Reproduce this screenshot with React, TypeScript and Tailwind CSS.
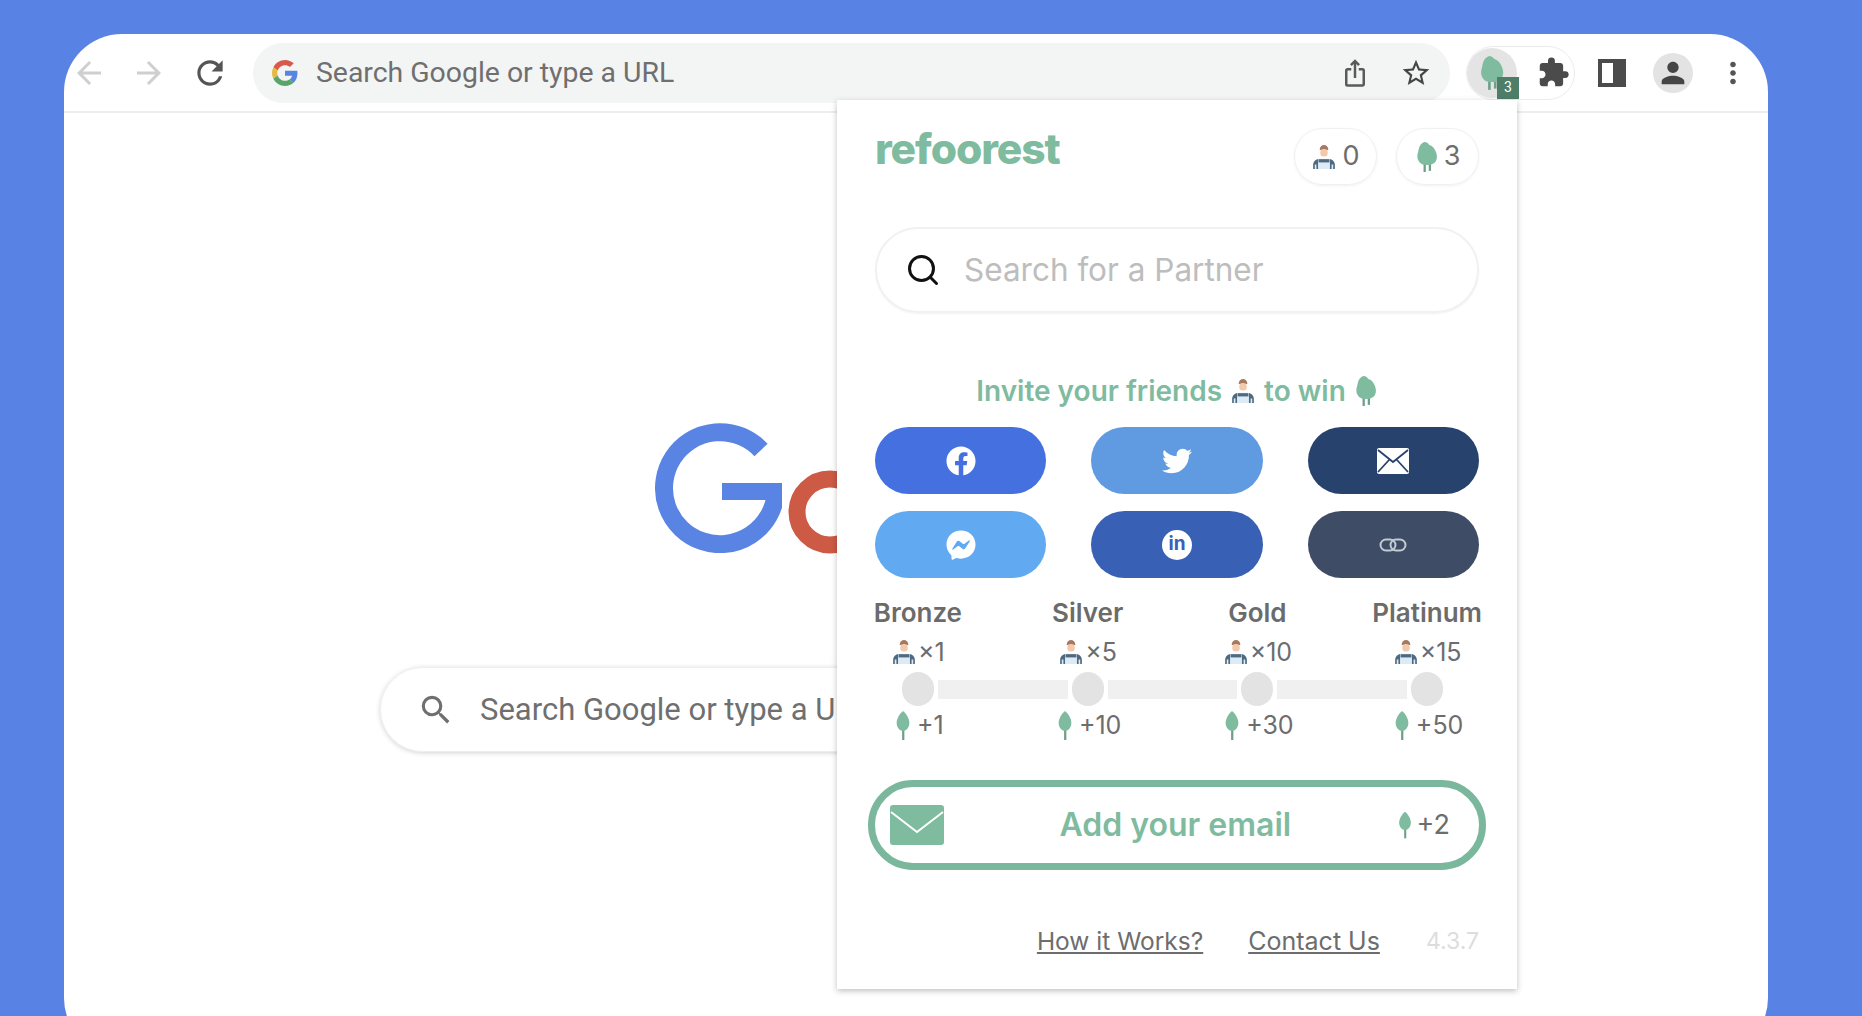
import { FaFacebook, FaFacebookMessenger, FaTwitter } from "react-icons/fa";
import { LuSearch } from "react-icons/lu";
import {
  MdArrowBack,
  MdArrowForward,
  MdExtension,
  MdIosShare,
  MdMoreVert,
  MdPerson,
  MdRefresh,
  MdSearch,
  MdStarBorder,
} from "react-icons/md";

const poppins = "font-['Inter','Noto_Sans',sans-serif]";

function Person({ className }: { className: string }) {
  return (
    <svg viewBox="0 0 24 24" className={className}>
      <path d="M8 5.500C8 2.500 10 1 12 1s4 1.500 4 4.500z" fill="#a5795f" />
      <rect x="8.600" y="4.500" width="6.800" height="7" rx="3" fill="#f3c9ad" />
      <path d="M2 23v-4c0-3 2.500-5 6-5.500h8c3.500.5 6 2.500 6 5.500v4z" fill="#dcebf5" />
      <path d="M2 23v-4c0-2.500 2-4.500 4.500-5.200V23H5v-4H3.500v4zM22 23v-4c0-2.500-2-4.500-4.500-5.200V23H19v-4h1.500v4z" fill="#4f6a80" />
      <rect x="7" y="14" width="10" height="3" fill="#4f6a80" />
    </svg>
  );
}

function Tree({ className, double }: { className: string; double?: boolean }) {
  if (double) {
    return (
      <svg viewBox="0 0 20 26" className={className}>
        <rect x="7" y="17" width="2" height="9" fill="#6f9f8a" />
        <rect x="11.500" y="17" width="2" height="8" fill="#6f9f8a" />
        <path d="M8 0C4 1 3 5 2.500 8 1.500 11 1 14 3 17c1.500 2 3 3 7 3s6-1 7.500-3c1.500-2.500 1.500-6 0-9-1-2.500-3-5-5.500-5.500C11 1 9.500 0 8 0z" fill="#7fbb9f" />
      </svg>
    );
  }
  return (
    <svg viewBox="0 0 24 32" className={className}>
      <rect x="11" y="18" width="2.500" height="14" fill="#6f9f8a" />
      <path d="M12 0c4 3 7 9 7 13 0 5-3 9-7 9s-7-4-7-9c0-4 3-10 7-13z" fill="#7fbb9f" />
    </svg>
  );
}

function ChromeG() {
  return (
    <svg viewBox="0 0 48 48" className="w-[26px] h-[26px] shrink-0">
      <path fill="#d9594c" d="M24 9.500c3.500 0 6.700 1.200 9.200 3.600l6.900-6.900C35.900 2.400 30.500 0 24 0 14.600 0 6.500 5.400 2.600 13.200l8 6.200C12.400 13.700 17.700 9.500 24 9.500z" />
      <path fill="#5a84e4" d="M47 24.500c0-1.600-.1-3.100-.4-4.500H24v9h12.900c-.6 3-2.200 5.500-4.800 7.200l7.700 6C44.300 38 47 31.800 47 24.500z" />
      <path fill="#e6b93f" d="M10.500 28.600c-.5-1.400-.8-3-.8-4.600s.3-3.200.8-4.600l-8-6.200C.9 16.500 0 20.100 0 24s.9 7.500 2.500 10.800z" />
      <path fill="#5aa469" d="M24 48c6.500 0 11.900-2.100 15.900-5.800l-7.700-6c-2.200 1.400-4.900 2.300-8.200 2.300-6.300 0-11.600-4.200-13.500-9.900l-8 6.200C6.500 42.600 14.600 48 24 48z" />
    </svg>
  );
}

const tiers = [
  { name: "Bronze", friends: "×1", trees: "+1" },
  { name: "Silver", friends: "×5", trees: "+10" },
  { name: "Gold", friends: "×10", trees: "+30" },
  { name: "Platinum", friends: "×15", trees: "+50" },
];

const shareButtons = [
  { color: "bg-[#4470e0]", icon: <FaFacebook size={30} /> },
  { color: "bg-[#609be2]", icon: <FaTwitter size={30} /> },
  {
    color: "bg-[#27426c]",
    icon: (
      <svg viewBox="0 0 32 26" className="w-[32px] h-[26px]">
        <rect width="32" height="26" rx="2" fill="#fff" />
        <path d="M1 2l15 12L31 2M1 24l11-12M31 24L20 12" fill="none" stroke="#27426c" strokeWidth="1.800" />
      </svg>
    ),
  },
  { color: "bg-[#61a9f0]", icon: <FaFacebookMessenger size={30} /> },
  {
    color: "bg-[#3860b4]",
    icon: (
      <div className="w-[30px] h-[30px] rounded-full bg-white flex items-center justify-center text-[19px] font-bold text-[#3860b4]">in</div>
    ),
  },
  {
    color: "bg-[#3e4d65]",
    icon: (
      <svg viewBox="0 0 28 16" className="w-[28px] h-[16px]">
        <rect x="1.500" y="2.500" width="15" height="11" rx="5.500" fill="none" stroke="#c2cad4" strokeWidth="2" />
        <rect x="11.500" y="2.500" width="15" height="11" rx="5.500" fill="none" stroke="#c2cad4" strokeWidth="2" />
      </svg>
    ),
  },
];

function Popup() {
  return (
    <div className={`absolute left-[773px] top-[66px] w-[680px] h-[889px] bg-white shadow-[0_2px_6px_rgba(0,0,0,0.25)] px-[38px] pt-[28px] flex flex-col ${poppins}`}>
      <div className="flex items-start justify-between">
        <div className="-mt-[1px] text-[42.5px] leading-[44px] font-extrabold text-[#7fbb9f] tracking-tight">refoorest</div>
        <div className="flex gap-[19px]">
          <div className="w-[83px] h-[57px] rounded-full border border-[#f0f0f0] shadow-[0_1px_3px_rgba(0,0,0,0.06)] flex items-center justify-center gap-[5px] text-[27px] text-[#6d6d6d]">
            <Person className="w-[26px] h-[26px]" />0
          </div>
          <div className="w-[83px] h-[57px] rounded-full border border-[#f0f0f0] shadow-[0_1px_3px_rgba(0,0,0,0.06)] flex items-center justify-center gap-[5px] text-[27px] text-[#6d6d6d]">
            <Tree double className="w-[24px] h-[30px]" />3
          </div>
        </div>
      </div>

      <div className="mt-[42px] h-[86px] rounded-full border-2 border-[#f1f1f1] shadow-[0_1px_2px_rgba(0,0,0,0.05)] flex items-center pl-[28px]">
        <LuSearch size={36} strokeWidth={2} className="text-[#111]" />
        <span className="ml-[23px] text-[31.5px] text-[#bdbdbd]">Search for a Partner</span>
      </div>

      <div className="mt-[62px] h-[32px] flex items-center justify-center gap-[8px] text-[28px] font-semibold text-[#7fbb9f]">
        Invite your friends
        <Person className="w-[26px] h-[28px]" />
        to win
        <Tree double className="w-[24px] h-[30px]" />
      </div>

      <div className="mt-[20px] grid grid-cols-3 gap-x-[45px] gap-y-[17px]">
        {shareButtons.map((b, i) => (
          <div key={i} className={`h-[67px] rounded-full flex items-center justify-center text-white ${b.color}`}>
            {b.icon}
          </div>
        ))}
      </div>

      <div className="mt-[19px] -ml-[42px] -mr-[33px] grid grid-cols-4">
        {tiers.map((t) => (
          <div key={t.name} className="text-center text-[26px] leading-[32px] font-semibold text-[#6b6b6b]">
            {t.name}
          </div>
        ))}
      </div>
      <div className="mt-[8px] -ml-[42px] -mr-[33px] grid grid-cols-4">
        {tiers.map((t) => (
          <div key={t.name} className="flex items-center justify-center gap-[1px] text-[25px] leading-[30px] text-[#6d6d6d]">
            <Person className="w-[26px] h-[28px]" />
            {t.friends}
          </div>
        ))}
      </div>
      <div className="mt-[5px] -ml-[42px] -mr-[33px] px-[69px] flex items-center h-[34px]">
        {tiers.map((t, i) => (
          <div key={t.name} className={`flex items-center ${i < 3 ? "flex-1" : ""}`}>
            <div className="w-[32px] h-[34px] rounded-full bg-[#e3e3e3] shrink-0" />
            {i < 3 && <div className="flex-1 h-[19px] mx-[4px] bg-[#f0f0f0]" />}
          </div>
        ))}
      </div>
      <div className="mt-[4px] -ml-[42px] -mr-[33px] grid grid-cols-4">
        {tiers.map((t) => (
          <div key={t.name} className="flex items-center justify-center gap-[3px] text-[25px] leading-[30px] text-[#6d6d6d]">
            <Tree className="w-[22px] h-[29px]" />
            {t.trees}
          </div>
        ))}
      </div>

      <div className="mt-[40px] -mx-[7px] h-[90px] rounded-full border-[7px] border-[#7ab79c] flex items-center pl-[15px] pr-[29px]">
        <svg viewBox="0 0 54 40" className="w-[54px] h-[40px] shrink-0">
          <rect width="54" height="40" rx="3" fill="#7fbb9f" />
          <path d="M1 7l26 20L53 7" fill="none" stroke="#fff" strokeWidth="2" />
        </svg>
        <div className="flex-1 pl-[12px] text-center text-[32px] font-semibold text-[#7fbb9f]">Add your email</div>
        <div className="flex items-center gap-[2px] text-[27px] text-[#6d6d6d]">
          <Tree className="w-[20px] h-[28px]" />
          +2
        </div>
      </div>

      <div className="mt-[56px] flex items-center justify-end text-[24.5px] leading-[30px] text-[#6d6d6d]">
        <span className="underline">How it Works?</span>
        <span className="ml-[45px] text-[25px] underline">Contact Us</span>
        <span className="ml-[46px] text-[23px] text-[#dddddd]">4.3.7</span>
      </div>
    </div>
  );
}

function Toolbar() {
  return (
    <div className="h-[79px] border-b-2 border-[#eeeeee] flex items-center font-['Roboto',sans-serif]">
      <div className="w-[50px] flex justify-center text-[#cfcfcf]"><MdArrowBack size={36} /></div>
      <div className="ml-[10px] w-[50px] flex justify-center text-[#cfcfcf]"><MdArrowForward size={36} /></div>
      <div className="ml-[11px] w-[50px] flex justify-center text-[#555555]"><MdRefresh size={38} /></div>
      <div className="ml-[18px] w-[1197px] h-[60px] rounded-full bg-[#f3f4f4] flex items-center pl-[19px] pr-[18px]">
        <ChromeG />
        <span className="ml-[18px] pt-[1px] flex-1 text-[28.4px] text-[#6f6f6f]">Search Google or type a URL</span>
        <MdIosShare size={30} className="text-[#5a5a5a]" />
        <MdStarBorder size={32} className="ml-[30px] text-[#454545]" />
      </div>
      <div className="ml-[16px] relative w-[109px] h-[54px] rounded-full border border-[#ececec] flex items-center">
        <div className="w-[50px] h-[50px] rounded-full bg-[#e4e4e4] flex items-center justify-center">
          <Tree double className="w-[26px] h-[36px]" />
        </div>
        <div className="absolute left-[30px] top-[30px] w-[22px] h-[22px] bg-[#4e7d68] text-white text-[14px] flex items-center justify-center">3</div>
        <MdExtension size={33} className="ml-[20px] text-[#4b4b4b]" />
      </div>
      <div className="ml-[23px] w-[28px] h-[28px] border-[4px] border-[#4b4b4b] flex justify-end">
        <div className="w-[9px] h-full bg-[#4b4b4b]" />
      </div>
      <div className="ml-[27px] w-[40px] h-[40px] rounded-full bg-[#e3e3e3] flex items-center justify-center">
        <MdPerson size={34} className="text-[#454545]" />
      </div>
      <MdMoreVert size={34} className="ml-[23px] text-[#555555]" />
    </div>
  );
}

function Logo() {
  return (
    <div className="flex items-start gap-[6px] h-[130px]">
      <svg viewBox="0 0 127 130" className="w-[127px] h-[130px] shrink-0">
        <path d="M106 27A56 56 0 1 0 120.800 70" fill="none" stroke="#5a84e4" strokeWidth="18" />
        <rect x="67" y="60" width="60" height="17" fill="#5a84e4" />
      </svg>
      <svg viewBox="0 0 84 84" className="w-[84px] h-[84px] mt-[47px] shrink-0">
        <circle cx="42" cy="42" r="33" fill="none" stroke="#cd5a45" strokeWidth="17" />
      </svg>
    </div>
  );
}

export default function App() {
  return (
    <div className="h-screen bg-[#5882e3] overflow-hidden pt-[34px] pl-[64px]">
      <div className="relative w-[1704px] h-[1022px] bg-white rounded-[58px]">
        <Toolbar />
        <div className="pl-[591px] pt-[310px]">
          <Logo />
        </div>
        <div className="mt-[114px] ml-[316px] w-[1072px] h-[85px] rounded-full border border-[#eeeeee] shadow-[0_1px_5px_rgba(0,0,0,0.18)] flex items-center pl-[36px] font-['Roboto',sans-serif]">
          <MdSearch size={38} className="text-[#6f6f6f]" />
          <span className="ml-[25px] pt-[2px] text-[31px] text-[#6f6f6f]">Search Google or type a URL</span>
        </div>
        <Popup />
      </div>
    </div>
  );
}
